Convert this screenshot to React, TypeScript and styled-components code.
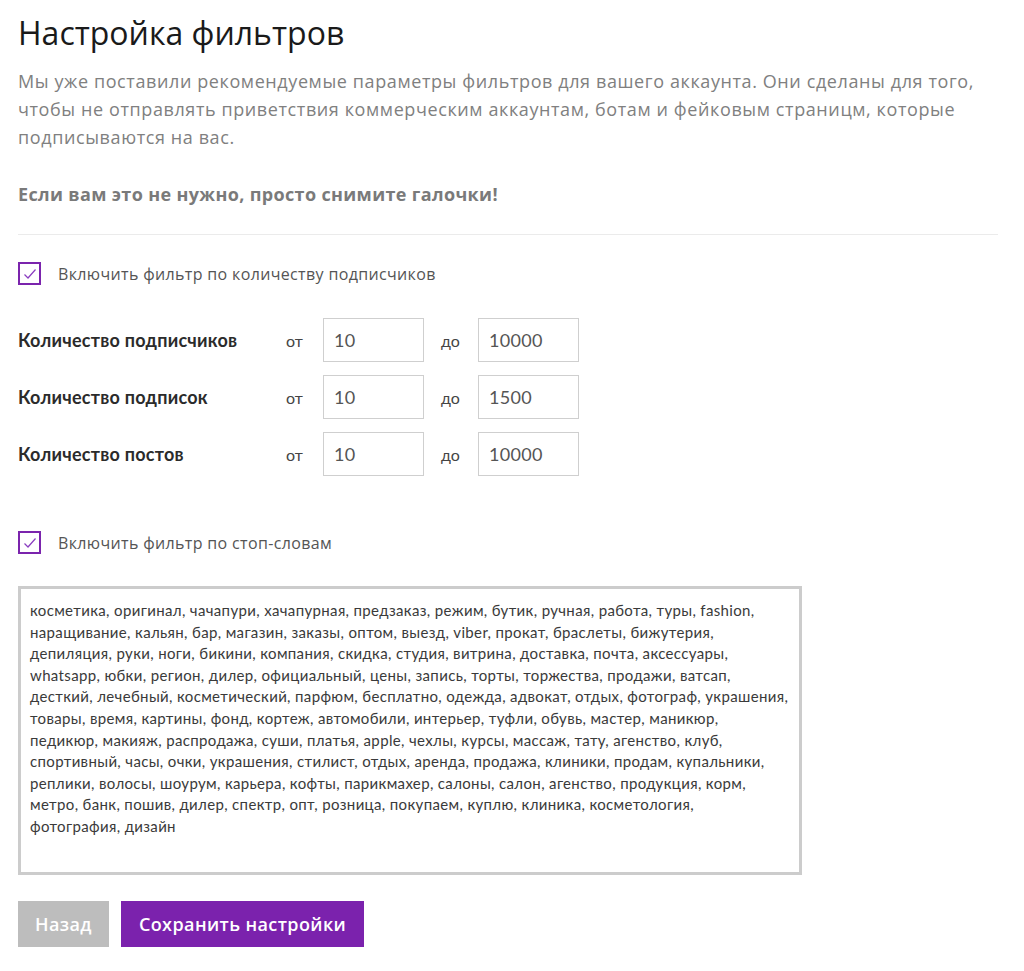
import React, { useState } from 'react';
import { styled, createGlobalStyle } from 'styled-components';

const GlobalStyle = createGlobalStyle`
  body {
    margin: 0;
    background: #ffffff;
    font-family: 'Open Sans', 'Noto Sans', sans-serif;
  }
  * { box-sizing: border-box; }
`;

const STOP_WORDS =
  'косметика, оригинал, чачапури, хачапурная, предзаказ, режим, бутик, ручная, работа, туры, fashion, наращивание, кальян, бар, магазин, заказы, оптом, выезд, viber, прокат, браслеты, бижутерия, депиляция, руки, ноги, бикини, компания, скидка, студия, витрина, доставка, почта, аксессуары, whatsapp, юбки, регион, дилер, официальный, цены, запись, торты, торжества, продажи, ватсап, десткий, лечебный, косметический, парфюм, бесплатно, одежда, адвокат, отдых, фотограф, украшения, товары, время, картины, фонд, кортеж, автомобили, интерьер, туфли, обувь, мастер, маникюр, педикюр, макияж, распродажа, суши, платья, apple, чехлы, курсы, массаж, тату, агенство, клуб, спортивный, часы, очки, украшения, стилист, отдых, аренда, продажа, клиники, продам, купальники, реплики, волосы, шоурум, карьера, кофты, парикмахер, салоны, салон, агенство, продукция, корм, метро, банк, пошив, дилер, спектр, опт, розница, покупаем, куплю, клиника, косметология,\nфотография, дизайн';

const ranges = [
  { label: 'Количество подписчиков', from: '10', to: '10000' },
  { label: 'Количество подписок', from: '10', to: '1500' },
  { label: 'Количество постов', from: '10', to: '10000' }
];

const Check = ({ checked, onToggle, children }: { checked: boolean; onToggle: () => void; children: React.ReactNode }) => (
  <S.CheckRow onClick={onToggle}>
    <S.CheckBox>
      {checked && (
        <svg width="14" height="12" viewBox="0 0 14 12">
          <path d="M1.5 6.5 L5 10 L12.5 1.5" fill="none" stroke="#8a3dc0" strokeWidth="1.2" />
        </svg>
      )}
    </S.CheckBox>
    <S.CheckLabel>{children}</S.CheckLabel>
  </S.CheckRow>
);

const App = () => {
  const [byFollowers, setByFollowers] = useState(true);
  const [byWords, setByWords] = useState(true);

  return (
    <>
      <GlobalStyle />
      <S.Page>
        <S.Title>Настройка фильтров</S.Title>
        <S.Intro>
          Мы уже поставили рекомендуемые параметры фильтров для вашего аккаунта. Они сделаны для того, чтобы не
          отправлять приветствия коммерческим аккаунтам, ботам и фейковым страницм, которые подписываются на вас.
        </S.Intro>
        <S.Hint>Если вам это не нужно, просто снимите галочки!</S.Hint>
        <S.Divider />

        <Check checked={byFollowers} onToggle={() => setByFollowers(!byFollowers)}>
          Включить фильтр по количеству подписчиков
        </Check>

        <S.RangeList>
          {ranges.map((r) => (
            <S.RangeRow key={r.label}>
              <S.RangeLabel>{r.label}</S.RangeLabel>
              <S.Word>от</S.Word>
              <S.NumInput defaultValue={r.from} />
              <S.Word>до</S.Word>
              <S.NumInput defaultValue={r.to} />
            </S.RangeRow>
          ))}
        </S.RangeList>

        <Check checked={byWords} onToggle={() => setByWords(!byWords)}>
          Включить фильтр по стоп-словам
        </Check>

        <S.Words defaultValue={STOP_WORDS} />

        <S.Buttons>
          <S.Button $tone="grey">Назад</S.Button>
          <S.Button $tone="purple">Сохранить настройки</S.Button>
        </S.Buttons>
      </S.Page>
    </>
  );
};

export default App;

const S = {
  Page: styled.div`
    width: 998px;
    padding: 12px 0 22px 18px;
  `,
  Title: styled.h1`
    margin: 0;
    font-family: 'Open Sans', sans-serif;
    font-size: 32px;
    font-weight: 400;
    line-height: 42px;
    color: #1a1a1a;
  `,
  Intro: styled.p`
    margin: 13px 0 0;
    padding-right: 4px;
    font-size: 18px;
    letter-spacing: 0.6px;
    line-height: 28px;
    color: #808080;
  `,
  Hint: styled.p`
    margin: 29px 0 0;
    font-size: 18px;
    font-weight: 700;
    letter-spacing: 0.35px;
    line-height: 28px;
    color: #7a7a7a;
  `,
  Divider: styled.div`
    margin-top: 26px;
    height: 1px;
    background: #ebebeb;
  `,
  CheckRow: styled.label`
    display: flex;
    align-items: center;
    gap: 17px;
    margin-top: 27px;
    cursor: pointer;
  `,
  CheckBox: styled.span`
    display: flex;
    align-items: center;
    justify-content: center;
    width: 23px;
    height: 23px;
    border: 2px solid #7b24ad;
    background: #fff;
  `,
  CheckLabel: styled.span`
    font-size: 16px;
    letter-spacing: 0.35px;
    color: #555;
  `,
  RangeList: styled.div`
    display: flex;
    flex-direction: column;
    gap: 13px;
    margin: 33px 0 55px;
  `,
  RangeRow: styled.div`
    display: flex;
    align-items: center;
  `,
  RangeLabel: styled.div`
    width: 268px;
    font-family: Lato, sans-serif;
    font-size: 18px;
    font-weight: 700;
    letter-spacing: 0.25px;
    color: #2b2b2b;
  `,
  Word: styled.div`
    width: 37px;
    font-family: Lato, sans-serif;
    font-size: 16px;
    color: #444;
  `,
  NumInput: styled.input`
    width: 101px;
    height: 44px;
    margin-right: 17px;
    padding: 0 10px;
    border: 1px solid #cfcfcf;
    font-family: Lato, sans-serif;
    font-size: 18px;
    letter-spacing: 0.3px;
    color: #555;
    outline: none;
    &:last-child { margin-right: 0; }
  `,
  Words: styled.textarea`
    display: block;
    width: 784px;
    height: 289px;
    margin-top: 32px;
    padding: 11px 9px;
    border: 3px solid #cccccc;
    resize: none;
    font-family: Lato, sans-serif;
    font-size: 15px;
    letter-spacing: 0.35px;
    line-height: 21.6px;
    color: #3a3a3a;
    outline: none;
  `,
  Buttons: styled.div`
    display: flex;
    gap: 12px;
    margin-top: 26px;
  `,
  Button: styled.button<{ $tone: 'grey' | 'purple' }>`
    height: 46px;
    padding: 0 ${(p) => (p.$tone === 'grey' ? '17px' : '18px')};
    border: none;
    background: ${(p) => (p.$tone === 'grey' ? '#bdbdbd' : '#7b22ad')};
    color: #fff;
    font-family: 'Open Sans', sans-serif;
    font-size: 18px;
    font-weight: 600;
    letter-spacing: 0.4px;
    cursor: pointer;
  `
};
